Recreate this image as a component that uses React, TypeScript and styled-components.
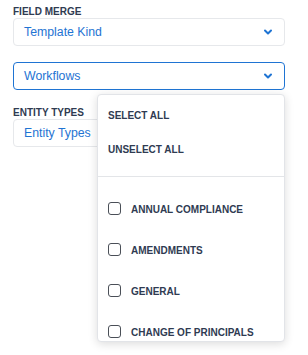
import React from "react";
import styled, { createGlobalStyle } from "styled-components";

const Global = createGlobalStyle`
  html, body { margin: 0; padding: 0; background: #ffffff; }
  body { font-family: "Liberation Sans", Arial, Helvetica, sans-serif; }
  * { box-sizing: border-box; }
`;

const Page = styled.div`
  width: 308px;
  height: 355px;
  padding: 6px 23px 0 13px;
  display: flex;
  flex-direction: column;
  overflow: hidden;
`;

const Field = styled.div<{ $gap?: number }>`
  position: relative;
  display: flex;
  flex-direction: column;
  margin-top: ${(p) => p.$gap ?? 0}px;
`;

const Label = styled.div`
  font-size: 10px;
  line-height: 12px;
  font-weight: 700;
  color: #2f3b52;
  text-transform: uppercase;
`;

const Select = styled.div<{ $active?: boolean }>`
  height: 28px;
  border: 1px solid ${(p) => (p.$active ? "#1f74d3" : "#e6e8eb")};
  border-radius: 4px;
  display: flex;
  align-items: center;
  justify-content: space-between;
  padding: 0 12px 0 10px;
  font-size: 12.3px;
  color: #1f74d3;
  background: #fff;
`;

const Chevron = () => (
  <svg width="8" height="6" viewBox="0 0 8 6">
    <path d="M1 1.5 L4 4.5 L7 1.5" fill="none" stroke="#1f74d3" strokeWidth="2" strokeLinecap="round" strokeLinejoin="round" />
  </svg>
);

const Menu = styled.div`
  position: absolute;
  top: 32px;
  left: 84px;
  right: 0;
  height: 248px;
  background: #fff;
  border: 1px solid #e2e4e8;
  border-radius: 4px;
  box-shadow: 0 2px 10px rgba(0, 0, 0, 0.14);
  overflow: hidden;
  z-index: 2;
`;

const Actions = styled.div`
  padding: 3px 0 10px;
  border-bottom: 1px solid #e3e5e8;
`;

const Action = styled.div`
  height: 34px;
  display: flex;
  align-items: center;
  padding-left: 10px;
  font-size: 10px;
  font-weight: 700;
  color: #2f3b52;
`;

const List = styled.div`
  padding-top: 12px;
`;

const Option = styled.div`
  height: 41px;
  display: flex;
  align-items: center;
  gap: 10px;
  padding-left: 10px;
  font-size: 10px;
  font-weight: 700;
  color: #2f3b52;
`;

const Box = styled.span`
  width: 13px;
  height: 13px;
  border: 1px solid #4a4f57;
  border-radius: 3px;
  flex: none;
  margin-top: -3px;
`;

const options = ["Annual Compliance", "Amendments", "General", "Change of Principals"];

export default function App() {
  return (
    <>
      <Global />
      <Page>
        <Field>
          <Label>Field Merge</Label>
          <Select>
            <span>Template Kind</span>
            <Chevron />
          </Select>
        </Field>
        <Field $gap={16}>
          <Select $active>
            <span>Workflows</span>
            <Chevron />
          </Select>
          <Menu>
            <Actions>
              <Action>SELECT ALL</Action>
              <Action>UNSELECT ALL</Action>
            </Actions>
            <List>
              {options.map((o) => (
                <Option key={o}>
                  <Box />
                  <span>{o.toUpperCase()}</span>
                </Option>
              ))}
            </List>
          </Menu>
        </Field>
        <Field $gap={17}>
          <Label>Entity Types</Label>
          <Select>
            <span>Entity Types</span>
            <Chevron />
          </Select>
        </Field>
      </Page>
    </>
  );
}
